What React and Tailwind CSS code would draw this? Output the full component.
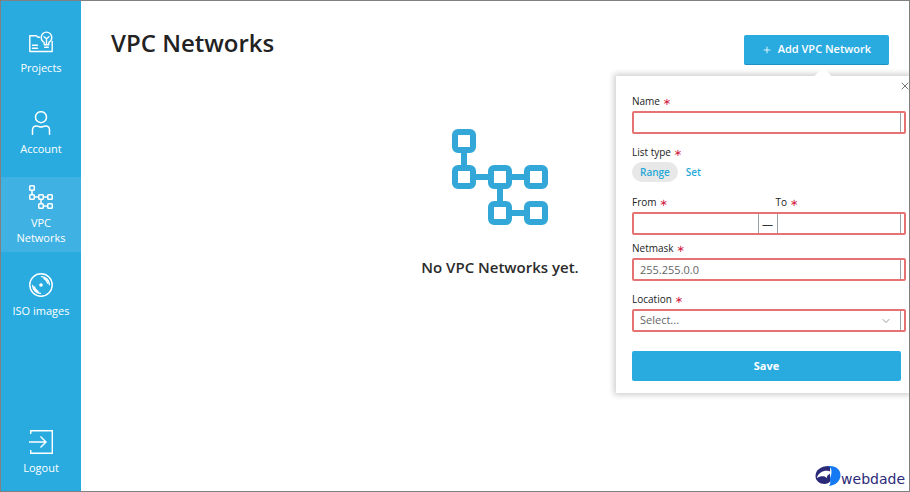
import React, { useState } from 'react';
import { ChevronDown, Plus, X } from 'lucide-react';

const ProjectsIcon = () => (
    <svg viewBox="0 0 24 24" className="w-6 h-6" fill="none" stroke="currentColor" strokeWidth="1.4" strokeLinecap="round" strokeLinejoin="round" aria-hidden="true">
        <path d="M10.5 7.2H9L7.4 5.7H.8V21.5H23.2V11.5" />
        <path d="M3.5 15.2H8.5M3.5 18.2H8.5" />
        <path d="M15.2 14.8v-2.3c-1.9-1.1-3-2.9-3-5.1a5.3 5.3 0 0 1 10.6 0c0 2.2-1.1 4-3 5.100v2.300z" />
        <path d="M15.7 17.3h3.6M15 6.8l2.5 2 2.5-2M17.5 8.8v5.7" />
    </svg>
);

const AccountIcon = () => (
    <svg viewBox="0 0 24 24" className="w-6 h-6" fill="none" stroke="currentColor" strokeWidth="1.5" strokeLinecap="round" strokeLinejoin="round" aria-hidden="true">
        <circle cx="12" cy="6.2" r="5.5" />
        <path d="M3.5 23.3v-4.3c0-2.5 1.6-4 4-4 1.8 0 2.6 1 4.5 1s2.7-1 4.5-1c2.4 0 4 1.5 4 4v4.3" />
    </svg>
);

const NetworkIcon = ({ className }) => (
    <svg viewBox="0 0 96 96" className={className} fill="none" stroke="currentColor" strokeWidth="6" aria-hidden="true">
        <rect x="3" y="3" width="18" height="18" rx="3" />
        <rect x="3" y="39" width="18" height="18" rx="3" />
        <rect x="39" y="39" width="18" height="18" rx="3" />
        <rect x="75" y="39" width="18" height="18" rx="3" />
        <rect x="39" y="75" width="18" height="18" rx="3" />
        <rect x="75" y="75" width="18" height="18" rx="3" />
        <path d="M12 23v14M23 48h14M59 48h14M48 59v14M59 84h14" />
    </svg>
);

const DiscIcon = () => (
    <svg viewBox="0 0 24 24" className="w-6 h-6" fill="none" stroke="currentColor" strokeWidth="1.4" strokeLinecap="round" aria-hidden="true">
        <circle cx="12" cy="12" r="11.2" />
        <circle cx="12" cy="12" r="1.8" fill="currentColor" stroke="none" />
        <path d="M12.5 3.6a8.4 8.4 0 0 1 7.9 7.9M15 5.6a7 7 0 0 1 3.6 4.4" />
        <path d="M11.5 20.4a8.4 8.4 0 0 1-7.9-7.9M9 18.400a7 7 0 0 1-3.600-4.400" />
    </svg>
);

const LogoutIcon = () => (
    <svg viewBox="0 0 24 24" className="w-6 h-6" fill="none" stroke="currentColor" strokeWidth="1.4" aria-hidden="true">
        <path d="M1.7 4V.8h21.6v22.4H1.7V20" />
        <path d="M0 12h17M11.5 6.5 17 12l-5.5 5.5" />
    </svg>
);

const navItems = [
    { label: 'Projects', icon: <ProjectsIcon /> },
    { label: 'Account', icon: <AccountIcon /> },
    { label: 'VPC Networks', icon: <NetworkIcon className="w-6 h-6" />, active: true },
    { label: 'ISO images', icon: <DiscIcon /> },
];

const NavLink = ({ label, icon, active }) => (
    <a
        href="#"
        aria-current={active ? 'page' : undefined}
        className={`flex flex-col items-center justify-center gap-1.5 min-h-[75px] px-2 text-center text-[11px] leading-[15px] text-white ${active ? 'bg-[#3fb2e3]' : 'hover:bg-[#3fb2e3]'}`}
    >
        {icon}
        <span>{label}</span>
    </a>
);

const Required = () => <span className="font-[DejaVu_Sans,sans-serif] text-[#d0213f]">∗</span>;

const Label = ({ htmlFor, children }) => (
    <label htmlFor={htmlFor} className="block text-[10px] leading-[15px] text-[#222]">
        {children} <Required />
    </label>
);

const fieldBox = 'border-2 border-[#e57373] rounded-xs pr-[3px]';
const inputStyle = 'block w-full min-w-0 h-[19px] px-1.5 text-[11px] text-[#666] bg-white border-gray-400 outline-none';

const AddNetworkForm = ({ onClose }) => {
    const [listType, setListType] = useState('Range');

    return (
        <form
            onSubmit={(e) => e.preventDefault()}
            className="absolute top-full -right-5 mt-[11px] w-[293px] pt-[18px] pb-3 pl-4 pr-[3px] bg-white shadow-[0_0_6px_2px_rgba(0,0,0,0.2)]"
        >
            <span className="absolute -top-1.5 right-20 w-3 h-3 rotate-45 bg-white" />
            <button type="button" aria-label="Close" onClick={onClose} className="absolute top-1 -right-0.5 text-[#777]">
                <X className="w-3 h-3" strokeWidth={2} />
            </button>

            <div className="flex flex-col gap-0.5 mb-[11px]">
                <Label htmlFor="name">Name</Label>
                <div className={fieldBox}>
                    <input id="name" type="text" className={`${inputStyle} border-r`} />
                </div>
            </div>

            <div className="flex flex-col gap-0.5 mb-[13px]">
                <span id="list-type" className="text-[10px] leading-[15px] text-[#222]">
                    List type <Required />
                </span>
                <div role="group" aria-labelledby="list-type" className="flex">
                    {['Range', 'Set'].map((type) => (
                        <button
                            key={type}
                            type="button"
                            aria-pressed={listType === type}
                            onClick={() => setListType(type)}
                            className={`h-5 px-2 rounded-full text-[10px] font-semibold text-[#27a9d8] ${listType === type ? 'bg-[#e8e8e8]' : ''}`}
                        >
                            {type}
                        </button>
                    ))}
                </div>
            </div>

            <div className="flex flex-col gap-0.5 mb-[6px]">
                <div className="grid grid-cols-[1fr_18px_1fr] pr-[5px]">
                    <Label htmlFor="from">From</Label>
                    <span />
                    <Label htmlFor="to">To</Label>
                </div>
                <div className={`grid grid-cols-[1fr_18px_1fr] items-center ${fieldBox}`}>
                    <input id="from" type="text" className={`${inputStyle} border-r`} />
                    <span className="text-center text-[11px] leading-[19px] text-[#333]">—</span>
                    <input id="to" type="text" className={`${inputStyle} border-x`} />
                </div>
            </div>

            <div className="flex flex-col gap-0.5 mb-[11px]">
                <Label htmlFor="netmask">Netmask</Label>
                <div className={fieldBox}>
                    <input id="netmask" type="text" defaultValue="255.255.0.0" className={`${inputStyle} border-r`} />
                </div>
            </div>

            <div className="flex flex-col gap-0.5 mb-[19px]">
                <Label htmlFor="location">Location</Label>
                <div className={`relative ${fieldBox}`}>
                    <select id="location" className={`${inputStyle} border-r appearance-none`}>
                        <option>Select...</option>
                    </select>
                    <ChevronDown className="absolute right-3 top-1 w-3 h-3 text-[#999] pointer-events-none" />
                </div>
            </div>

            <div className="pr-[5px]">
                <button type="submit" className="block w-full h-[30px] rounded-xs bg-[#29abe0] text-[11px] font-bold text-white">
                    Save
                </button>
            </div>
        </form>
    );
};

const WebdadeLogo = () => (
    <a href="#" className="flex items-end self-end mt-auto mr-1 mb-1 text-[#2b2a78]">
        <svg viewBox="0 0 26 22" className="w-[26px] h-[22px]" aria-hidden="true">
            <path d="M15 1C6 .5.5 5 .5 11c0 4.5 4 8 9 8 2.500 0 4.500-1 5.500-2.500z" fill="#2b2a78" />
            <path d="M15 1c6.500 0 10.500 4 10.500 9 0 5.500-4.500 10.500-11.500 11 1.500-2 1.500-3.500 1-5.500-.5-3 1.500-5 1.500-8C16.500 4.500 16 2.500 13 1.100z" fill="#1479f2" />
            <path d="M1.800 13C3 8 8 5.300 13 5.800c2.500.3 3.200 2 1.500 3.200-2 1.300-2.800 2.200-2.600 4.200-1-1-1.500-2-3.400-2-2.500 0-4.500.3-6.700 1.800z" fill="#fff" />
        </svg>
        <span className="font-[DejaVu_Sans,sans-serif] text-[14px] leading-[16px]">webdade</span>
    </a>
);

const App = () => {
    const [showForm, setShowForm] = useState(true);

    return (
        <div className="flex min-h-screen overflow-hidden border border-[#808080] bg-white font-['Open_Sans',sans-serif]">
            {/* Sidebar */}
            <nav className="flex flex-col gap-1.5 w-20 shrink-0 pt-3.5 pb-px bg-[#29abe0]">
                {navItems.map((item) => (
                    <NavLink key={item.label} {...item} />
                ))}
                <div className="mt-auto">
                    <NavLink label="Logout" icon={<LogoutIcon />} />
                </div>
            </nav>

            {/* Content */}
            <main className="flex flex-col flex-1 min-w-0">
                <header className="flex items-start justify-between pl-[30px] pr-5 pt-6">
                    <h1 className="text-[24px] leading-9 font-semibold text-[#222]">VPC Networks</h1>
                    <div className="relative mt-2.5">
                        <button
                            type="button"
                            onClick={() => setShowForm(!showForm)}
                            className="flex items-center gap-1.5 h-[30px] px-[18px] rounded-xs border-b border-[#1f8fc0] bg-[#29abe0] text-[11px] font-semibold text-white"
                        >
                            <Plus className="w-2.5 h-2.5" />
                            Add VPC Network
                        </button>
                        {showForm && <AddNetworkForm onClose={() => setShowForm(false)} />}
                    </div>
                </header>

                <section className="flex flex-col items-center gap-8 pl-[30px] pr-5 pt-16">
                    <NetworkIcon className="w-24 h-24 text-[#33a8d8]" />
                    <p className="text-[15px] leading-5 font-semibold text-[#2b2b2b]">No VPC Networks yet.</p>
                </section>

                <WebdadeLogo />
            </main>
        </div>
    );
};

export default App;
